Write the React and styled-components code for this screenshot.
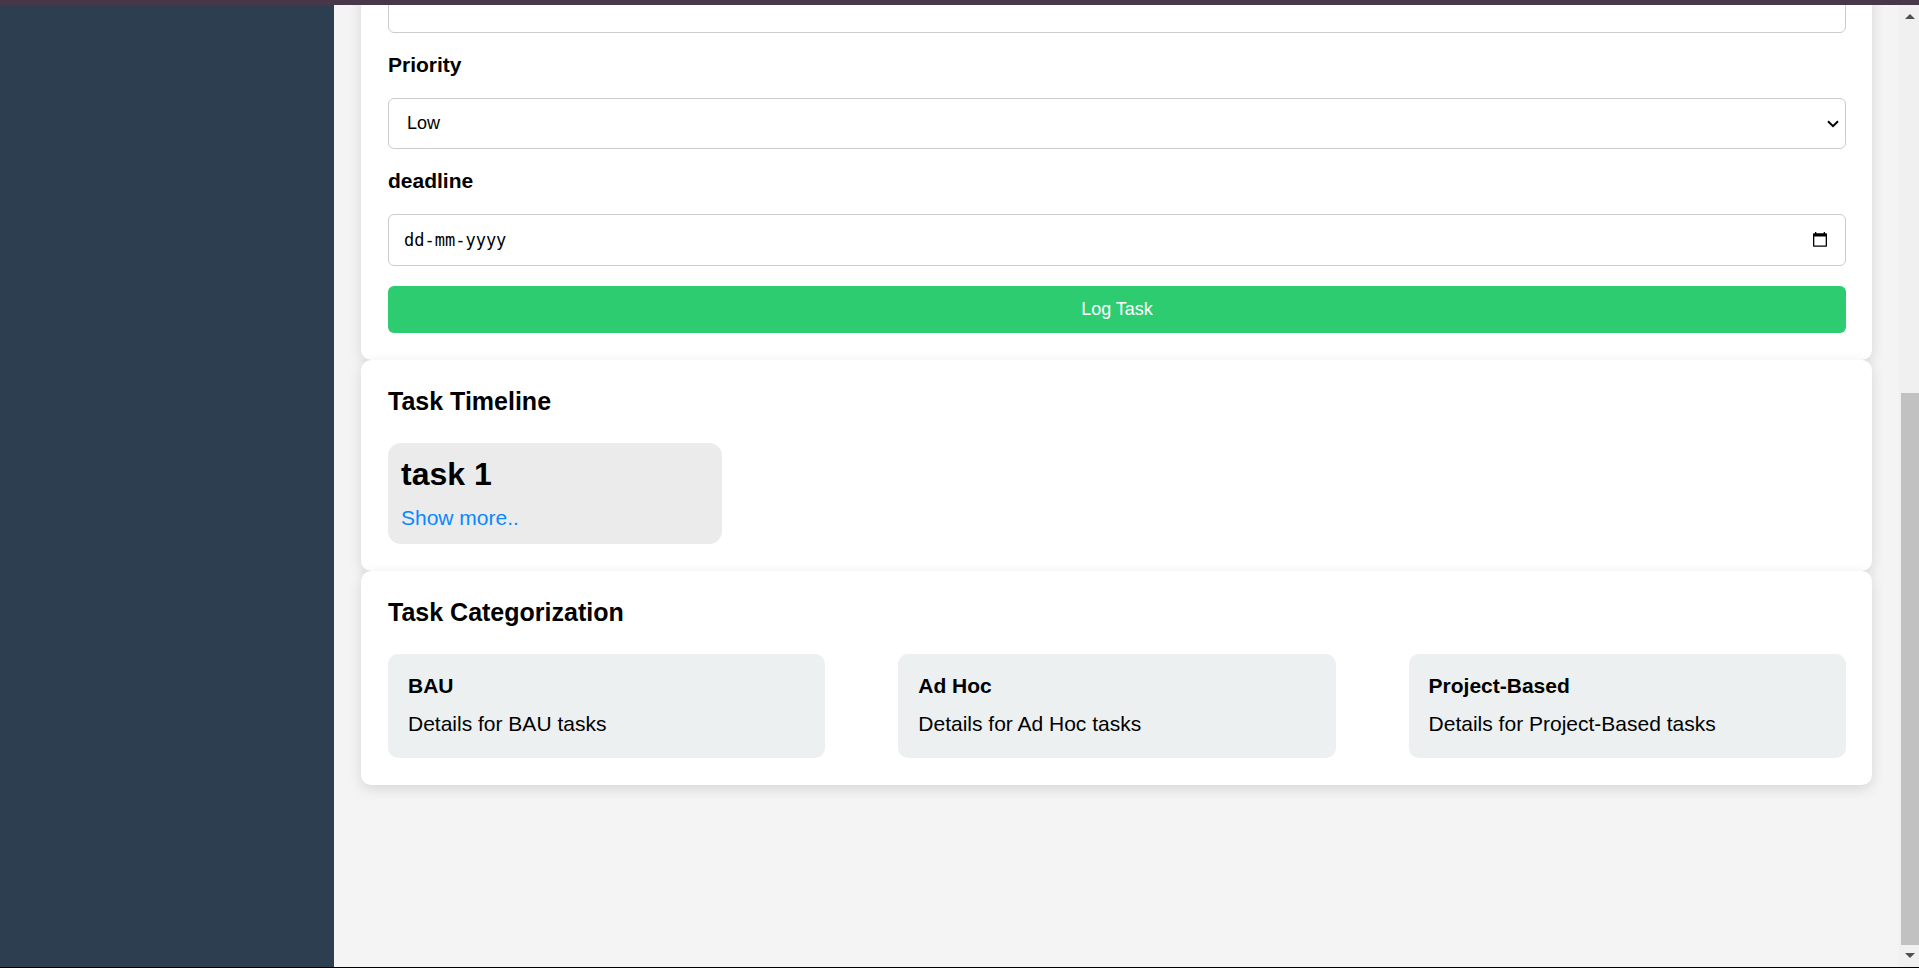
import React from "react";
import styled, { createGlobalStyle } from "styled-components";

const GlobalStyle = createGlobalStyle`
  *, *::before, *::after { box-sizing: border-box; }
  body {
    margin: 0;
    font-family: "Liberation Sans", Arial, sans-serif;
    font-size: 21px;
    line-height: 24px;
    color: #000;
    background: #f4f4f4;
  }
  h2, h3, p { margin: 0; }
`;

const Screen = styled.div`
  display: flex;
  height: 100vh;
  overflow: hidden;
  border-top: 5px solid #483749;
  border-bottom: 1px solid #000;
`;

const Sidebar = styled.aside`
  flex: 0 0 334px;
  background: #2c3e50;
`;

/* The page is shown scrolled down, so the content starts above the top edge. */
const Main = styled.main`
  flex: 1;
  min-width: 0;
  overflow: hidden;
  padding: 0 27px;
`;

const Content = styled.div`
  margin-top: -51px;
`;

const Card = styled.section`
  padding: 27px 26px 27px 27px;
  border-radius: 10px;
  background: #fff;
  box-shadow: 0 4px 14px rgba(0, 0, 0, 0.12);
`;

const TaskForm = styled.form`
  display: flex;
  flex-direction: column;
  gap: 20px;
`;

const Label = styled.label`
  padding-bottom: 1px;
  font-weight: bold;
`;

const control = `
  width: 100%;
  height: 52px;
  border: 1px solid #ccc;
  border-radius: 6px;
  background: #fff;
  color: #000;
  font-family: inherit;
  font-size: 18px;
`;

const TextField = styled.input`
  ${control}
  padding: 0 14px;
`;

const SelectWrap = styled.div`
  display: grid;
  align-items: center;
  > * { grid-area: 1 / 1; }
  > svg {
    justify-self: end;
    margin-right: 7px;
    pointer-events: none;
  }
`;

const Select = styled.select`
  ${control}
  height: 51px;
  appearance: none;
  padding: 0 18px 2px;
`;

const DateField = styled.div`
  ${control}
  display: flex;
  align-items: center;
  padding: 0 18px 0 15px;
`;

const DateInput = styled.input`
  flex: 1;
  min-width: 0;
  padding: 0;
  border: 0;
  outline: 0;
  background: none;
  font-family: "DejaVu Sans Mono", monospace;
  font-size: 17px;
  &::placeholder { color: #000; opacity: 1; }
`;

const IconButton = styled.button`
  display: flex;
  padding: 0;
  border: 0;
  background: none;
`;

const SubmitButton = styled.button`
  height: 47px;
  border: 0;
  border-radius: 6px;
  background: #2ecc71;
  color: #fff;
  font-family: inherit;
  font-size: 18px;
`;

const SectionTitle = styled.h2`
  margin-bottom: 28px;
  font-size: 25px;
  line-height: 28px;
`;

const TaskCard = styled.article`
  width: 334px;
  padding: 13px 13px 14px;
  border-radius: 13px;
  background: #ebebeb;
`;

const TaskName = styled.h3`
  margin-bottom: 14px;
  font-size: 32px;
  line-height: 36px;
`;

const ShowMore = styled.a`
  display: block;
  color: #0a88ff;
  text-decoration: none;
`;

const Categories = styled.div`
  display: flex;
  justify-content: space-between;
`;

const Category = styled.article`
  width: 30%;
  padding: 20px 20px 22px;
  border-radius: 10px;
  background: #ecf0f1;
`;

const CategoryName = styled.h3`
  margin-bottom: 14px;
  font-size: 21px;
`;

const ScrollTrack = styled.div`
  flex: 0 0 20px;
  display: flex;
  flex-direction: column;
  align-items: center;
  gap: 8px;
  padding: 9px 0 9px 2px;
  background: #f0f0f0;
`;

/* The track above the thumb and the thumb itself share the height 13 to 20. */
const ScrollGap = styled.div`
  flex: 13;
`;

const ScrollThumb = styled.div`
  flex: 20;
  width: 100%;
  background: #c1c1c1;
`;

const Arrow = ({ d }) => (
  <svg width="10" height="5" viewBox="0 0 10 5" fill="#505050" aria-hidden="true">
    <path d={d} />
  </svg>
);

const categories = [
  ["BAU", "Details for BAU tasks"],
  ["Ad Hoc", "Details for Ad Hoc tasks"],
  ["Project-Based", "Details for Project-Based tasks"],
];

export default function App() {
  return (
    <>
      <GlobalStyle />
      <Screen>
        <Sidebar />
        <Main>
          <Content>
            <Card>
              <TaskForm onSubmit={(e) => e.preventDefault()}>
                <TextField type="text" aria-label="Task" />
                <Label htmlFor="priority">Priority</Label>
                <SelectWrap>
                  <Select id="priority" defaultValue="Low">
                    <option>Low</option>
                    <option>Medium</option>
                    <option>High</option>
                  </Select>
                  <svg width="12" height="8" viewBox="0 0 12 8" fill="none" stroke="#000" strokeWidth="2" aria-hidden="true">
                    <path d="M1 1.2l5 5 5-5" />
                  </svg>
                </SelectWrap>
                <Label htmlFor="deadline">deadline</Label>
                <DateField>
                  <DateInput id="deadline" type="text" placeholder="dd-mm-yyyy" />
                  <IconButton type="button" aria-label="Choose date">
                    <svg width="14" height="16" viewBox="0 0 14 16" aria-hidden="true">
                      <path fillRule="evenodd" d="M2 0h1.300v1.200h7.400V0H12v1.200h1q1 0 1 1V14q0 .8-.8.8H.8Q0 14.800 0 14V2.200q0-1 1-1h1zM1.300 4.600v8.900h11.400V4.600z" />
                    </svg>
                  </IconButton>
                </DateField>
                <SubmitButton type="submit">Log Task</SubmitButton>
              </TaskForm>
            </Card>
            <Card>
              <SectionTitle>Task Timeline</SectionTitle>
              <TaskCard>
                <TaskName>task 1</TaskName>
                <ShowMore href="#task-1">Show more..</ShowMore>
              </TaskCard>
            </Card>
            <Card>
              <SectionTitle>Task Categorization</SectionTitle>
              <Categories>
                {categories.map(([name, details]) => (
                  <Category key={name}>
                    <CategoryName>{name}</CategoryName>
                    <p>{details}</p>
                  </Category>
                ))}
              </Categories>
            </Card>
          </Content>
        </Main>
        <ScrollTrack aria-hidden="true">
          <Arrow d="M5 0l5 5H0z" />
          <ScrollGap />
          <ScrollThumb />
          <Arrow d="M0 0h10L5 5z" />
        </ScrollTrack>
      </Screen>
    </>
  );
}
